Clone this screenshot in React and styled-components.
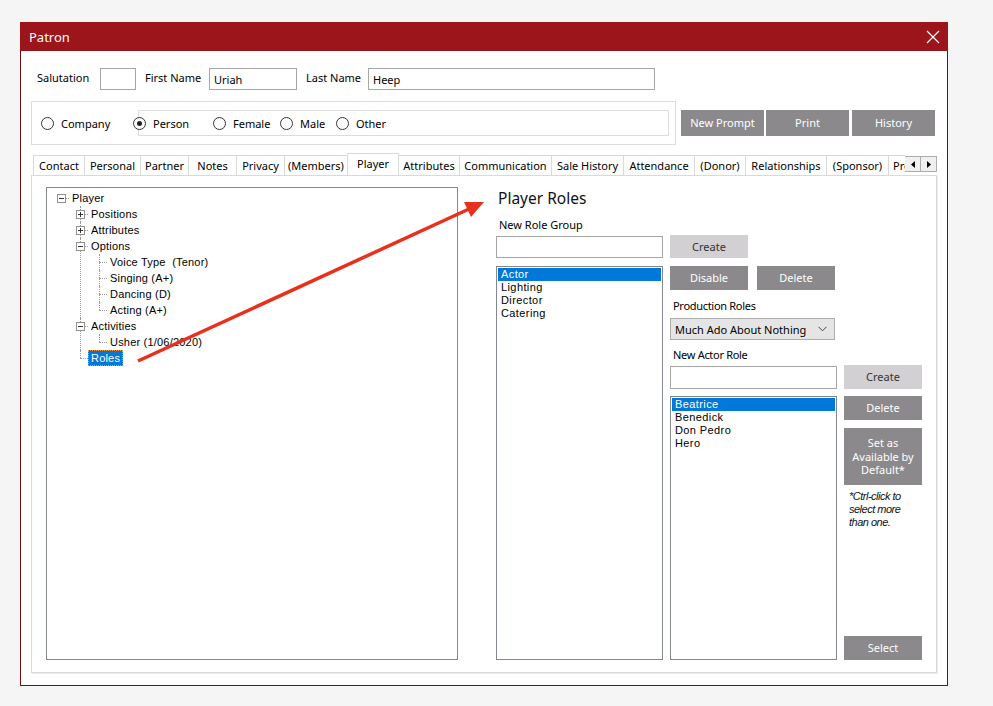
import React from 'react';
import styled, { createGlobalStyle } from 'styled-components';

const GlobalStyle = createGlobalStyle`
  html, body { margin: 0; padding: 0; background: #f5f5f5; }
  body {
    font-family: "Noto Sans", "Open Sans", sans-serif;
    font-size: 11px;
    color: #000;
  }
  * { box-sizing: border-box; }
`;

const tabs = [
  { label: 'Contact', w: 52 },
  { label: 'Personal', w: 57 },
  { label: 'Partner', w: 49 },
  { label: 'Notes', w: 49 },
  { label: 'Privacy', w: 49 },
  { label: '(Members)', w: 64 },
  { label: 'Player', w: 52, active: true },
  { label: 'Attributes', w: 62 },
  { label: 'Communication', w: 93 },
  { label: 'Sale History', w: 73 },
  { label: 'Attendance', w: 72 },
  { label: '(Donor)', w: 52 },
  { label: 'Relationships', w: 82 },
  { label: '(Sponsor)', w: 63 },
  { label: 'Prompts', w: 60 },
];

const tree = {
  label: 'Player',
  open: true,
  children: [
    { label: 'Positions', open: false, children: [] },
    { label: 'Attributes', open: false, children: [] },
    {
      label: 'Options',
      open: true,
      children: [
        { label: 'Voice Type  (Tenor)' },
        { label: 'Singing (A+)' },
        { label: 'Dancing (D)' },
        { label: 'Acting (A+)' },
      ],
    },
    { label: 'Activities', open: true, children: [{ label: 'Usher (1/06/2020)' }] },
    { label: 'Roles', selected: true },
  ],
};

const roleGroups = ['Actor', 'Lighting', 'Director', 'Catering'];
const actorRoles = ['Beatrice', 'Benedick', 'Don Pedro', 'Hero'];

const Page = styled.div`
  position: relative;
  width: 993px;
  height: 706px;
  padding: 22px 0 0 20px;
  overflow: hidden;
`;

const Window = styled.div`
  width: 928px;
  height: 664px;
  border: 1px solid #6b1217;
  border-top: none;
  background: #fff;
  display: flex;
  flex-direction: column;
`;

const TitleBar = styled.div`
  height: 29px;
  margin: 0 -1px;
  background: #9b151b;
  display: flex;
  align-items: center;
  justify-content: space-between;
  padding: 0 8px 0 9px;
  color: #fff;
  font-size: 13px;
`;

const Body = styled.div`
  flex: 1;
  display: flex;
  flex-direction: column;
  padding: 0 10px 12px 10px;
  min-height: 0;
`;

const NameRow = styled.div`
  display: flex;
  align-items: center;
  margin-top: 17px;
  padding-left: 6px;
  height: 22px;
`;

const FieldLabel = styled.span`
  width: ${p => p.$w}px;
  flex: none;
  font-size: 11px;
  white-space: nowrap;
  margin-top: -3px;
`;

const TextInput = styled.div`
  width: ${p => p.$w}px;
  height: ${p => p.$h || 22}px;
  flex: none;
  border: 1px solid #a6a6a6;
  background: #fff;
  padding: 0 4px;
  display: flex;
  align-items: center;
  margin-right: ${p => p.$mr || 0}px;
  font-size: 11px;
`;

const RadioRow = styled.div`
  display: flex;
  align-items: center;
  margin-top: 11px;
`;

const GroupBox = styled.div`
  width: 645px;
  height: 44px;
  border: 1px solid #dcdcdc;
  display: flex;
  align-items: center;
  padding-left: 9px;
`;

const InnerGroup = styled.div`
  width: 531px;
  height: 26px;
  border: 1px solid #dcdcdc;
  display: flex;
  align-items: center;
`;

const RadioItem = styled.label`
  display: flex;
  align-items: center;
  gap: 7px;
  width: ${p => p.$w}px;
  margin-left: ${p => p.$ml || 0}px;
  flex: none;
  font-size: 11px;
`;

const RadioCircle = styled.span`
  width: 13px;
  height: 13px;
  border-radius: 50%;
  border: 1px solid #333;
  background: #fff;
  display: flex;
  align-items: center;
  justify-content: center;
  flex: none;
  &::after {
    content: '';
    width: 5px;
    height: 5px;
    border-radius: 50%;
    background: #222;
    display: ${p => (p.$checked ? 'block' : 'none')};
  }
`;

const ActionButtons = styled.div`
  display: flex;
  margin-left: 5px;
  gap: 2px;
`;

const GrayButton = styled.button`
  width: ${p => p.$w || 78}px;
  height: ${p => p.$h || 24}px;
  border: none;
  margin: 0;
  padding: 0 2px;
  background: ${p => (p.$light ? '#d2d0d3' : '#8b898c')};
  color: ${p => (p.$light ? '#333' : '#fff')};
  font-family: "Noto Sans", "Open Sans", sans-serif;
  font-size: 11px;
  line-height: 13.5px;
  flex: none;
  cursor: pointer;
`;

const TabBar = styled.div`
  display: flex;
  align-items: flex-end;
  margin-top: 7px;
  height: 23px;
  position: relative;
  z-index: 1;
`;

const TabClip = styled.div`
  flex: 1;
  display: flex;
  align-items: flex-end;
  overflow: hidden;
  height: 23px;
  padding-left: 2px;
`;

const Tab = styled.div`
  width: ${p => p.$w}px;
  flex: none;
  height: ${p => (p.$active ? 23 : 20)}px;
  margin-right: -1px;
  margin-bottom: ${p => (p.$active ? -1 : 0)}px;
  border: 1px solid #d9d9d9;
  border-bottom: none;
  background: #fff;
  display: flex;
  align-items: center;
  justify-content: ${p => (p.$clipped ? 'flex-start' : 'center')};
  padding-left: ${p => (p.$clipped ? 4 : 0)}px;
  padding-bottom: ${p => (p.$active ? 4 : 0)}px;
  font-size: 11px;
  white-space: nowrap;
  position: relative;
  z-index: ${p => (p.$active ? 2 : 0)};
`;

const ScrollArrows = styled.div`
  display: flex;
  align-self: center;
  margin-top: 1px;
`;

const ScrollArrow = styled.div`
  width: 17px;
  height: 16px;
  border: 1px solid #adadad;
  margin-left: -1px;
  background: #f0f0f0;
  display: flex;
  align-items: center;
  justify-content: center;
`;

const Panel = styled.div`
  flex: 1;
  border: 1px solid #d9d9d9;
  box-shadow: 1px 1px 0 #ececec;
  display: flex;
  padding: 11px 14px 12px 14px;
  min-height: 0;
`;

const TreeBox = styled.div`
  width: 412px;
  flex: none;
  border: 1px solid #828790;
  padding: 2px 0 0 10px;
  font-family: "Liberation Sans", Arial, sans-serif;
  font-size: 11px;
  letter-spacing: 0.2px;
`;

const TreeList = styled.ul`
  margin: 0;
  padding: 0 0 0 ${p => (p.$root ? 0 : 19)}px;
`;

const TreeItem = styled.li`
  list-style: none;
  position: relative;
  &::before {
    content: '';
    position: absolute;
    left: 4px;
    top: 0;
    ${p => (p.$last ? 'height: 8px;' : 'bottom: 0;')}
    border-left: 1px dotted #9a9a9a;
    display: ${p => (p.$root ? 'none' : 'block')};
  }
`;

const TreeRow = styled.div`
  display: flex;
  align-items: center;
  height: 16px;
`;

const Expander = styled.span`
  width: 9px;
  height: 9px;
  border: 1px solid #919191;
  background: #fff;
  display: flex;
  align-items: center;
  justify-content: center;
  flex: none;
  position: relative;
  z-index: 1;
`;

const Spacer = styled.span`
  width: 4px;
  flex: none;
`;

const HLine = styled.span`
  width: ${p => p.$w}px;
  border-top: 1px dotted #9a9a9a;
  flex: none;
`;

const NodeLabel = styled.span`
  padding: 0 2px;
  height: 16px;
  line-height: 14px;
  white-space: pre;
  color: ${p => (p.$selected ? '#fff' : '#000')};
  background: ${p => (p.$selected ? '#0078d7' : 'transparent')};
  border: 1px ${p => (p.$selected ? 'dotted #f29a3c' : 'solid transparent')};
`;

const RolesArea = styled.div`
  flex: 1;
  margin-left: 38px;
  display: flex;
  flex-direction: column;
  min-height: 0;
`;

const Heading = styled.div`
  margin-top: 1px;
  padding-left: 2px;
  height: 20px;
  line-height: 20px;
  font-size: 15.5px;
  color: #111;
`;

const SmallLabel = styled.div`
  margin-top: ${p => p.$mt || 0}px;
  padding-left: ${p => p.$pl || 3}px;
  height: 16px;
  line-height: 16px;
  font-size: ${p => p.$size || 11}px;
  letter-spacing: ${p => p.$ls || 0}px;
  white-space: nowrap;
`;

const InlineRow = styled.div`
  display: flex;
  align-items: center;
  gap: ${p => p.$gap || 0}px;
  margin-top: ${p => p.$mt || 0}px;
`;

const Lower = styled.div`
  flex: 1;
  display: flex;
  margin-top: 8px;
  min-height: 0;
`;

const ListBox = styled.div`
  width: 167px;
  flex: none;
  border: 1px solid #828790;
  padding: 1px;
  font-family: "Liberation Sans", Arial, sans-serif;
  font-size: 11px;
  letter-spacing: 0.4px;
  background: #fff;
`;

const ListItem = styled.div`
  height: 13px;
  line-height: 13px;
  padding-left: 3px;
  color: ${p => (p.$selected ? '#fff' : '#000')};
  background: ${p => (p.$selected ? '#0078d7' : 'transparent')};
`;

const RightCol = styled.div`
  margin-left: 7px;
  display: flex;
  flex-direction: column;
  flex: 1;
  min-height: 0;
`;

const Dropdown = styled.div`
  width: 165px;
  height: 22px;
  margin-top: 4px;
  border: 1px solid #adadad;
  background: #e5e5e5;
  display: flex;
  align-items: center;
  justify-content: space-between;
  padding: 0 7px 0 4px;
  font-size: 11px;
  white-space: nowrap;
`;

const ActorGrid = styled.div`
  flex: 1;
  display: grid;
  grid-template-columns: 167px 78px;
  grid-template-rows: 24px 1fr;
  column-gap: 7px;
  row-gap: 7px;
  margin-top: 2px;
  min-height: 0;
`;

const ButtonStack = styled.div`
  display: flex;
  flex-direction: column;
`;

const Note = styled.div`
  margin-top: 5px;
  padding-left: 5px;
  font-family: "Liberation Sans", Arial, sans-serif;
  font-style: italic;
  font-size: 11px;
  letter-spacing: -0.5px;
  line-height: 13px;
  color: #111;
`;

const BottomButton = styled(GrayButton)`
  margin-top: auto;
`;

const Overlay = styled.svg`
  position: absolute;
  left: 0;
  top: 0;
  pointer-events: none;
`;

function Radio({ label, checked, w, ml }) {
  return (
    <RadioItem $w={w} $ml={ml}>
      <RadioCircle $checked={checked} />
      {label}
    </RadioItem>
  );
}

function TreeNode({ node, root, last }) {
  const hasChildren = node.children !== undefined;
  return (
    <TreeItem $root={root} $last={last}>
      <TreeRow>
        {hasChildren ? (
          <Expander>
            <svg width="5" height="5" viewBox="0 0 5 5">
              <rect x="0" y="2" width="5" height="1" fill="#333" />
              {!node.open && <rect x="2" y="0" width="1" height="5" fill="#333" />}
            </svg>
          </Expander>
        ) : (
          <Spacer />
        )}
        <HLine $w={hasChildren ? 3 : 8} />
        <NodeLabel $selected={node.selected}>{node.label}</NodeLabel>
      </TreeRow>
      {hasChildren && node.open && node.children.length > 0 && (
        <TreeList>
          {node.children.map((c, i) => (
            <TreeNode key={c.label} node={c} last={i === node.children.length - 1} />
          ))}
        </TreeList>
      )}
    </TreeItem>
  );
}

export default function App() {
  return (
    <Page>
      <GlobalStyle />
      <Window>
        <TitleBar>
          <span>Patron</span>
          <svg width="14" height="14" viewBox="0 0 14 14">
            <path d="M1 1 L13 13 M13 1 L1 13" stroke="#fff" strokeWidth="1.2" />
          </svg>
        </TitleBar>
        <Body>
          <NameRow>
            <FieldLabel $w={63}>Salutation</FieldLabel>
            <TextInput $w={36} $mr={9} />
            <FieldLabel $w={64}>First Name</FieldLabel>
            <TextInput $w={88} $mr={9}>Uriah</TextInput>
            <FieldLabel $w={62}>Last Name</FieldLabel>
            <TextInput $w={287}>Heep</TextInput>
          </NameRow>

          <RadioRow>
            <GroupBox>
              <Radio label="Company" w={97} />
              <InnerGroup>
                <Radio label="Person" checked w={80} ml={-6} />
                <Radio label="Female" w={67} />
                <Radio label="Male" w={56} />
                <Radio label="Other" w={60} />
              </InnerGroup>
            </GroupBox>
            <ActionButtons>
              <GrayButton $w={83} $h={26}>New Prompt</GrayButton>
              <GrayButton $w={83} $h={26}>Print</GrayButton>
              <GrayButton $w={83} $h={26} style={{ marginLeft: 1 }}>History</GrayButton>
            </ActionButtons>
          </RadioRow>

          <TabBar>
            <TabClip>
              {tabs.map((t, i) => (
                <Tab key={t.label} $w={t.w} $active={t.active} $clipped={i === tabs.length - 1}>
                  {t.label}
                </Tab>
              ))}
            </TabClip>
            <ScrollArrows>
              <ScrollArrow>
                <svg width="4" height="7" viewBox="0 0 4 7"><polygon points="4,0 4,7 0,3.5" fill="#000" /></svg>
              </ScrollArrow>
              <ScrollArrow>
                <svg width="4" height="7" viewBox="0 0 4 7"><polygon points="0,0 0,7 4,3.5" fill="#000" /></svg>
              </ScrollArrow>
            </ScrollArrows>
          </TabBar>

          <Panel>
            <TreeBox>
              <TreeList $root>
                <TreeNode node={tree} root last />
              </TreeList>
            </TreeBox>

            <RolesArea>
              <Heading>Player Roles</Heading>
              <SmallLabel $mt={9}>New Role Group</SmallLabel>
              <InlineRow $mt={2} $gap={7}>
                <TextInput $w={167} />
                <GrayButton $light $h={23}>Create</GrayButton>
              </InlineRow>
              <Lower>
                <ListBox>
                  {roleGroups.map((r, i) => (
                    <ListItem key={r} $selected={i === 0}>{r}</ListItem>
                  ))}
                </ListBox>
                <RightCol>
                  <InlineRow $gap={9}>
                    <GrayButton>Disable</GrayButton>
                    <GrayButton>Delete</GrayButton>
                  </InlineRow>
                  <SmallLabel $mt={8} $ls={-0.3}>Production Roles</SmallLabel>
                  <Dropdown>
                    <span>Much Ado About Nothing</span>
                    <svg width="9" height="6" viewBox="0 0 9 6">
                      <path d="M0.5 0.8 L4.5 4.8 L8.5 0.8" stroke="#444" strokeWidth="1" fill="none" />
                    </svg>
                  </Dropdown>
                  <SmallLabel $mt={7} $ls={-0.3}>New Actor Role</SmallLabel>
                  <ActorGrid>
                    <TextInput $w={167} $h={23} style={{ alignSelf: 'end' }} />
                    <GrayButton $light>Create</GrayButton>
                    <ListBox>
                      {actorRoles.map((r, i) => (
                        <ListItem key={r} $selected={i === 0}>{r}</ListItem>
                      ))}
                    </ListBox>
                    <ButtonStack>
                      <GrayButton>Delete</GrayButton>
                      <GrayButton $h={57} style={{ marginTop: 8 }}>
                        Set as<br />Available by<br />Default*
                      </GrayButton>
                      <Note>
                        *Ctrl-click to<br />select more<br />than one.
                      </Note>
                      <BottomButton>Select</BottomButton>
                    </ButtonStack>
                  </ActorGrid>
                </RightCol>
              </Lower>
            </RolesArea>
          </Panel>
        </Body>
      </Window>

      <Overlay width="993" height="706" viewBox="0 0 993 706">
        <line x1="138" y1="361" x2="469" y2="209" stroke="#e8301c" strokeWidth="3.5" />
        <polygon points="484,202 471,217 464,202" fill="#e8301c" />
      </Overlay>
    </Page>
  );
}
